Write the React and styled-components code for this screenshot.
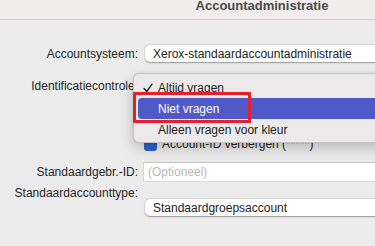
import styled, { createGlobalStyle } from "styled-components"

const GlobalStyle = createGlobalStyle`
    html, body {
        margin: 0;
        padding: 0;
        background: #ececec;
    }
    body {
        font-family: "Liberation Sans", Arial, sans-serif;
        font-size: 12px;
        color: #262626;
    }
`

const Window = styled.div`
    position: relative;
    width: 375px;
    height: 246px;
    overflow: hidden;
    background: #ececec;
`

const TitleBar = styled.div`
    height: 19px;
    box-sizing: content-box;
    border-bottom: 1px solid #cdcaca;
    background: #f2eded;
    display: flex;
    justify-content: center;
    align-items: flex-start;
    padding-left: 149px;
`

const Title = styled.div`
    font-size: 13px;
    line-height: 13px;
    font-weight: 700;
    color: #4a4a4a;
    margin-top: -1px;
`

const Form = styled.div`
    display: flex;
    flex-direction: column;
`

const Row = styled.div`
    display: grid;
    grid-template-columns: 138px 1fr;
    column-gap: 7px;
    align-items: ${p => p.$align || "center"};
    margin-top: ${p => p.$mt}px;
`

const Label = styled.div`
    text-align: right;
    white-space: nowrap;
    line-height: 14px;
    color: #262626;
`

const Popup = styled.div`
    height: 17px;
    margin-right: -30px;
    margin-top: ${p => p.$mt || 0}px;
    background: #fff;
    border-radius: 5px;
    box-shadow: 0 0.5px 1.5px rgba(0, 0, 0, 0.35), 0 0 0 0.5px rgba(0, 0, 0, 0.06);
    display: flex;
    align-items: center;
    padding-left: 8px;
    white-space: nowrap;
    color: #222;
`

const TextField = styled.div`
    height: 20px;
    box-sizing: border-box;
    margin-left: -2px;
    margin-right: -30px;
    background: #fff;
    border-top: 1px solid #c2c2c2;
    border-left: 1px solid #d6d6d6;
    border-bottom: 1px solid #dcdcdc;
    display: flex;
    align-items: center;
    padding-left: 4px;
    color: #b8b8b8;
`

const CheckRow = styled.div`
    display: flex;
    align-items: center;
    gap: 5px;
    margin-top: ${p => p.$mt}px;
    padding-left: 144px;
    height: 14px;
    white-space: nowrap;
`

const CheckBox = styled.div`
    width: 13px;
    height: 13px;
    border-radius: 3px;
    background: #2f5fd0;
`

const Menu = styled.div`
    position: absolute;
    left: 133px;
    top: 73px;
    width: 270px;
    height: 70px;
    box-sizing: border-box;
    padding: 3px 0 4px;
    background: #ebe9e9;
    border: 1px solid rgba(0, 0, 0, 0.16);
    border-radius: 6px;
    box-shadow: 0 5px 14px rgba(0, 0, 0, 0.22), 0 0 2px rgba(0, 0, 0, 0.1);
`

const Item = styled.div`
    height: 21px;
    margin: 0 5px 0 4px;
    padding-left: 5px;
    border-radius: 4px;
    display: flex;
    align-items: center;
    white-space: nowrap;
    background: ${p => (p.$active ? "#5059c8" : "transparent")};
    color: ${p => (p.$active ? "#fff" : "#222")};
`

const Check = styled.span`
    width: 15px;
    display: flex;
    align-items: center;
`

const Annotation = styled.div`
    position: absolute;
    left: 133px;
    top: 92px;
    width: 118px;
    height: 31px;
    box-sizing: border-box;
    border: 3px solid #e5202a;
`

function CheckMark() {
    return (
        <svg width="10" height="10" viewBox="0 0 10 10">
            <path d="M1 5.5 L3.8 8.5 L9 1.2" fill="none" stroke="#1e1e1e" strokeWidth="1.4" strokeLinecap="round" strokeLinejoin="round" />
        </svg>
    )
}

const items = [
    { label: "Altijd vragen", checked: true },
    { label: "Niet vragen", active: true },
    { label: "Alleen vragen voor kleur" },
]

export default function App() {
    return (
        <Window>
            <GlobalStyle />
            <TitleBar>
                <Title>Accountadministratie</Title>
            </TitleBar>
            <Form>
                <Row $mt={25}>
                    <Label>Accountsysteem:</Label>
                    <Popup>Xerox-standaardaccountadministratie</Popup>
                </Row>
                <Row $mt={15}>
                    <Label>Identificatiecontrole:</Label>
                    {/* popup sits under the open menu, its value is hidden */}
                    <Popup />
                </Row>
                <CheckRow $mt={43}>
                    <CheckBox />
                    <span>Account-ID verbergen (*****)</span>
                </CheckRow>
                <Row $mt={11}>
                    <Label>Standaardgebr.-ID:</Label>
                    <TextField>(Optioneel)</TextField>
                </Row>
                <Row $mt={4} $align="start">
                    <Label>Standaardaccounttype:</Label>
                    <Popup $mt={13}>Standaardgroepsaccount</Popup>
                </Row>
            </Form>
            <Menu>
                {items.map((item, i) => (
                    <Item key={i} $active={item.active}>
                        <Check>{item.checked && <CheckMark />}</Check>
                        {item.label}
                    </Item>
                ))}
            </Menu>
            <Annotation />
        </Window>
    )
}
